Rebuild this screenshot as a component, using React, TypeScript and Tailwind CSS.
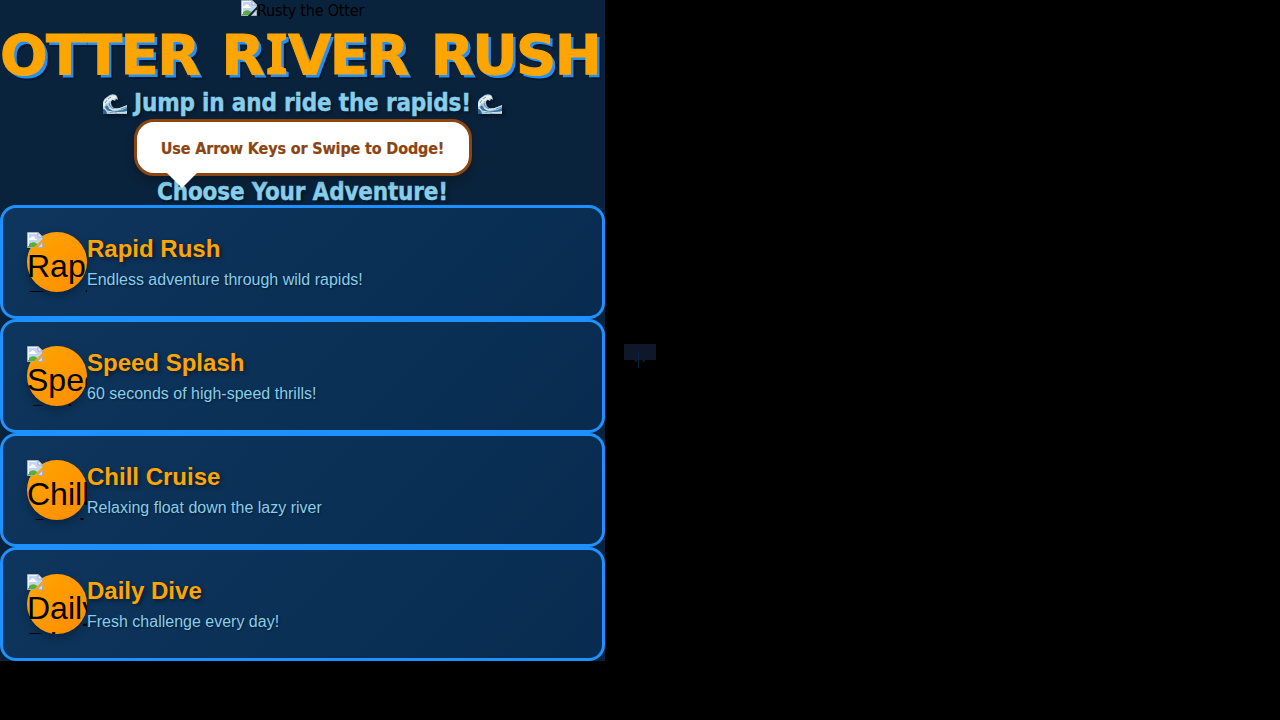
const modes = [
  { name: "Rapid Rush", text: "Endless adventure through wild rapids!" },
  { name: "Speed Splash", text: "60 seconds of high-speed thrills!" },
  { name: "Chill Cruise", text: "Relaxing float down the lazy river" },
  { name: "Daily Dive", text: "Fresh challenge every day!" },
];

function BrokenImage() {
  return (
    <svg width="16" height="16" viewBox="0 0 16 16" className="block shrink-0">
      <path d="M0.5 0.5H11L15.5 5V7L7 15.5H0.5Z" fill="#c3d5f5" />
      <path d="M2 8Q1.8 5.8 4 5.8Q4.6 3.8 6.5 4.4Q8.3 4.8 8.2 6.5Q9.8 6.7 9.7 8Z" fill="#fff" />
      <path d="M1 15V13.5Q5 8 9.5 11.5L10.5 12L7.5 15Z" fill="#55ad3b" />
      <path d="M7 15.5H0.5V0.5H11L15.5 5V7" fill="none" stroke="#a5adba" />
      <path d="M1.5 14V1.5H10.5" fill="none" stroke="#eef3fc" />
      <path d="M11 0.5V5H15.5Z" fill="#f5f7fb" stroke="#a5adba" />
      <path d="M15.5 10V15.5H10.5Z" fill="#cfdcee" stroke="#a5adba" />
    </svg>
  );
}

function Wave() {
  return (
    <svg width="24" height="20" viewBox="0 0 24 20" className="block shrink-0 drop-shadow-[2px_2px_2px_rgba(0,0,0,0.5)]">
      <path d="M0 20V10Q0 5 4 3Q8-1 13 1Q15 3 15 6L13 5L12 7L10 6Q8 6 8 9Q8 12 11 14Q16 15 19 13L24 11V20Z" fill="#a9c8da" />
      <path d="M0 11Q0 6 4 4Q8 0 13 2L14 5L12 4L11 6L9 5L8 7L6 7L5 10L3 9L2 12L0 13Z" fill="#e6f0f1" />
      <path d="M2 13Q4 10 5 13Q8 18 14 17Q19 17 24 14V17Q17 20 11 19Q4 19 2 13Z" fill="#356e9d" />
      <path d="M0 15Q3 15 4 20H0Z" fill="#2e6292" />
      <path d="M6 14Q10 17 15 15Q19 14 24 12M1 14Q4 18 9 18Q16 19 24 18" fill="none" stroke="#dcecef" strokeWidth="1" />
      <path d="M6 9Q6 13 11 15M18 15L24 13M12 18L17 17M4 6L2 9M8 3L5 5" fill="none" stroke="#4b7fa8" strokeWidth="0.8" />
    </svg>
  );
}

function ModeCard({ name, text }: { name: string; text: string }) {
  return (
    <button className="flex h-[114px] w-full items-center rounded-[16px] border-[3px] border-[#1e90ff] bg-linear-135 from-[#0e355d] to-[#082c50] px-6 text-left font-['Liberation_Sans',Arial,sans-serif]">
      <span className="block size-[60px] shrink-0 rounded-full bg-linear-135 from-[#ffa500] to-[#ff8c00] shadow-[0_4px_8px_rgba(0,0,0,0.3)]">
        <span className="block size-[60px] overflow-hidden text-[32px] leading-[36px] whitespace-normal text-black">
          <BrokenImage />
          {name}
        </span>
      </span>
      <span className="flex flex-col gap-[9px] pb-px">
        <span className="text-2xl leading-[27px] font-bold text-[#ffa500] [text-shadow:2px_2px_4px_rgba(0,0,0,0.5)]">{name}</span>
        <span className="text-base leading-[18px] text-[#87ceeb] [text-shadow:1px_1px_2px_rgba(0,0,0,0.5)]">{text}</span>
      </span>
    </button>
  );
}

export default function App() {
  return (
    <div className="flex h-screen w-full items-start overflow-hidden bg-black">
      <main className="flex h-[661px] w-[605px] shrink-0 flex-col items-center bg-[#0a233c] font-['DejaVu_Sans_Condensed','DejaVu_Sans',sans-serif] whitespace-nowrap">
        <div className="flex h-[22px] items-start text-black">
          <BrokenImage />
          <span className="text-[16px] leading-[22px] tracking-[-0.2px]">Rusty the Otter</span>
        </div>
        <h1 className="-ml-[5px] h-[68px] w-[600px] font-['DejaVu_Sans',sans-serif] text-[56px] leading-[65px] font-black tracking-[-1.6px] [word-spacing:5px] text-[#ffa500] [-webkit-text-stroke:1px_#ffa500] [text-shadow:3px_3px_0_#1e90ff,5px_5px_0_rgba(0,0,0,0.3)]">
          OTTER R<span className="mr-[2px] ml-[3px] font-['Noto_Sans',sans-serif] text-[55px] leading-none font-bold">I</span>VER RUSH
        </h1>
        <h2 className="flex h-[29px] items-start gap-[7px] pt-1 text-2xl leading-[19px] font-bold tracking-[-0.18px] text-[#87ceeb] [-webkit-text-stroke:0.4px_#87ceeb] [text-shadow:2px_2px_4px_rgba(0,0,0,0.5)]">
          <Wave />
          <span>Jump in and ride the rapids!</span>
          <Wave />
        </h2>
        <div className="relative z-10 flex h-[57px] w-[338px] items-center justify-center rounded-[20px] border-[3px] border-[#8b4513] bg-white pt-0.5 text-base font-bold tracking-[-0.15px] text-[#8b4513] shadow-[0_4px_8px_rgba(0,0,0,0.3)] [-webkit-text-stroke:0.2px_#8b4513]">
          Use Arrow Keys or Swipe to Dodge!
          <span className="absolute top-full left-[30px] border-x-[15px] border-t-[15px] border-x-transparent border-t-white" />
        </div>
        <h2 className="h-[29px] text-2xl leading-[32px] font-bold tracking-[-0.18px] text-[#87ceeb] [-webkit-text-stroke:0.4px_#87ceeb] [text-shadow:2px_2px_4px_rgba(0,0,0,0.5)]">
          Choose Your Adventure!
        </h2>
        <div className="w-full">
          {modes.map((mode) => (
            <ModeCard key={mode.name} {...mode} />
          ))}
        </div>
      </main>
      <svg width="32" height="32" viewBox="0 0 32 32" className="mt-[344px] ml-[19px] shrink-0">
        <rect width="32" height="16" fill="#0f172a" />
        <path d="M8 13l2-3 1 3-1 2zM22 13l2-3 2 1-3 4z" fill="#141a2b" />
        <path d="M10 16h3v2h-2zM18 16h3v2h-2z" fill="#05200d" />
        <rect x="14" y="8" width="1" height="16" fill="#0c2049" />
      </svg>
    </div>
  );
}
